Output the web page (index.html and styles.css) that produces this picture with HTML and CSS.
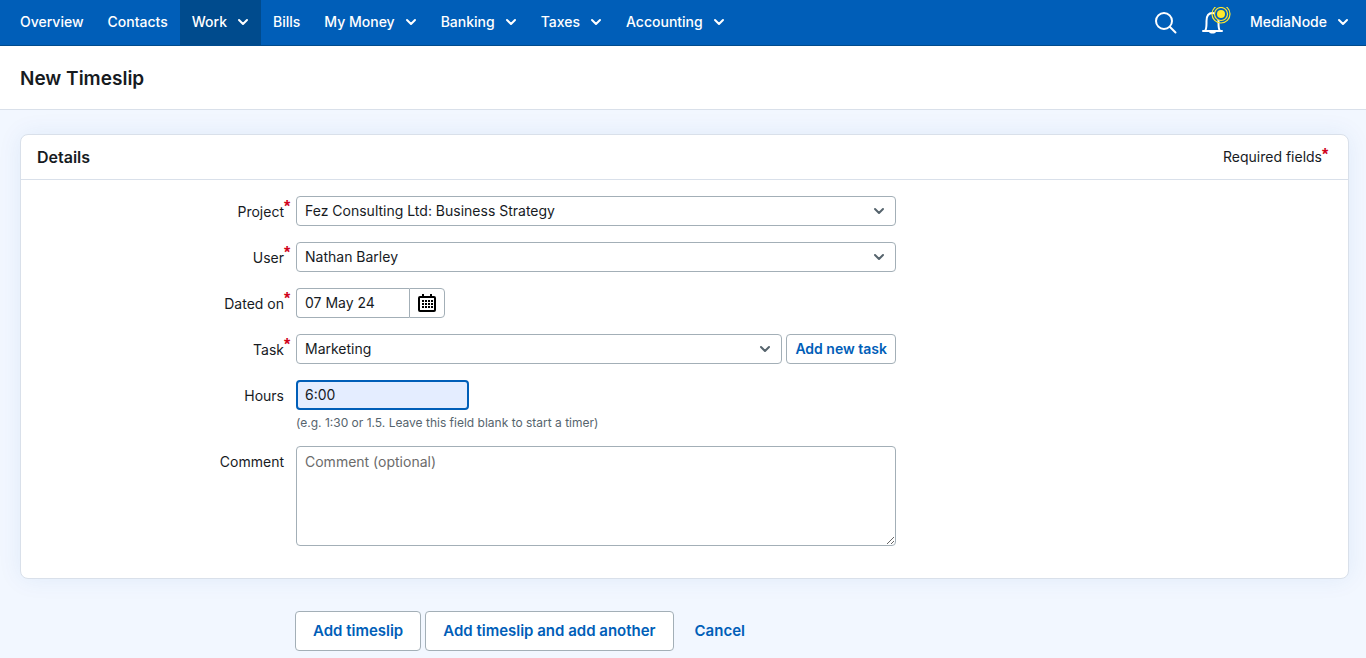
FILE: index.html
```html
<!DOCTYPE html>
<html lang="en">
<head>
    <meta charset="UTF-8">
    <meta name="viewport" content="width=device-width, initial-scale=1.0">
    <title>New Timeslip</title>
    <link rel="stylesheet" href="styles.css">
</head>
<body>
    <!-- Chevron shared by the menus and the drop-downs -->
    <svg class="sprite" width="0" height="0" aria-hidden="true">
        <symbol id="chevron" viewBox="0 0 12 8">
            <path d="M2 2l4 4 4-4" fill="none" stroke="currentColor" stroke-width="2" stroke-linecap="round" stroke-linejoin="round"/>
        </symbol>
    </svg>

    <header class="navbar">
        <nav class="nav-main">
            <a href="#">Overview</a>
            <a href="#">Contacts</a>
            <a href="#" class="active">Work <svg class="chevron"><use href="#chevron"/></svg></a>
            <a href="#">Bills</a>
            <a href="#">My Money <svg class="chevron"><use href="#chevron"/></svg></a>
            <a href="#">Banking <svg class="chevron"><use href="#chevron"/></svg></a>
            <a href="#">Taxes <svg class="chevron"><use href="#chevron"/></svg></a>
            <a href="#">Accounting <svg class="chevron"><use href="#chevron"/></svg></a>
        </nav>
        <div class="nav-tools">
            <button type="button" class="icon-button" aria-label="Search">
                <svg width="24" height="24" viewBox="0 0 24 24" fill="none" stroke="#fff" stroke-width="2">
                    <circle cx="10" cy="10" r="8"/>
                    <path d="M16 16l5.500 5.500" stroke-linecap="round"/>
                </svg>
            </button>
            <button type="button" class="icon-button" aria-label="Notifications">
                <svg width="32" height="32" viewBox="0 0 32 32" fill="none">
                    <path d="M3 24h19M5 24c1.500-2 1.500-4 1.500-8v-2c0-5 2-8 6-8s6 3 6 8v2c0 4 0 6 1.500 8" stroke="#fff" stroke-width="2" stroke-linecap="round" stroke-linejoin="round"/>
                    <path d="M9 25h7c-1 2-6 2-7 0z" fill="#fff"/>
                    <circle cx="21" cy="7" r="9" stroke="#ffe92e" stroke-width="1.200"/>
                    <circle cx="21" cy="7" r="6.500" fill="#005eb8" stroke="#ffe92e" stroke-width="1.200"/>
                    <circle cx="21" cy="7" r="4" fill="#ffe92e"/>
                </svg>
            </button>
            <a href="#">MediaNode <svg class="chevron"><use href="#chevron"/></svg></a>
        </div>
    </header>

    <div class="page-title">
        <h1>New Timeslip</h1>
    </div>

    <main>
        <form>
            <section class="card">
                <div class="card-header">
                    <h2>Details</h2>
                    <span class="required">Required fields</span>
                </div>
                <div class="card-body">
                    <div class="row">
                        <label for="project" class="required">Project</label>
                        <div class="select-wrap">
                            <select id="project">
                                <option>Fez Consulting Ltd: Business Strategy</option>
                            </select>
                            <svg class="chevron"><use href="#chevron"/></svg>
                        </div>
                    </div>
                    <div class="row">
                        <label for="user" class="required">User</label>
                        <div class="select-wrap">
                            <select id="user">
                                <option>Nathan Barley</option>
                            </select>
                            <svg class="chevron"><use href="#chevron"/></svg>
                        </div>
                    </div>
                    <div class="row">
                        <label for="dated-on" class="required">Dated on</label>
                        <div class="date-group">
                            <input type="text" id="dated-on" value="07 May 24">
                            <button type="button" aria-label="Choose date">
                                <svg width="20" height="20" viewBox="0 0 20 20" fill="none" stroke="#000" stroke-width="2">
                                    <rect x="2" y="4" width="16" height="14" rx="1"/>
                                    <path d="M6 1v4M14 1v4"/>
                                    <path d="M5 8h11M5 11h11M5 14h11" stroke-dasharray="2 1"/>
                                    <path d="M4 9.500h12M4 12.500h12" stroke="#fff" stroke-width="1"/>
                                </svg>
                            </button>
                        </div>
                    </div>
                    <div class="row">
                        <label for="task" class="required">Task</label>
                        <div class="task-group">
                            <div class="select-wrap">
                                <select id="task">
                                    <option>Marketing</option>
                                </select>
                                <svg class="chevron"><use href="#chevron"/></svg>
                            </div>
                            <button type="button" class="button button-small">Add new task</button>
                        </div>
                    </div>
                    <div class="row">
                        <label for="hours">Hours</label>
                        <div class="hours-group">
                            <input type="text" id="hours" value="6:00" aria-describedby="hours-hint">
                            <p id="hours-hint" class="hint">(e.g. 1:30 or 1.5. Leave this field blank to start a timer)</p>
                        </div>
                    </div>
                    <div class="row">
                        <label for="comment">Comment</label>
                        <textarea id="comment" placeholder="Comment (optional)"></textarea>
                    </div>
                </div>
            </section>
            <div class="actions">
                <button type="submit" class="button">Add timeslip</button>
                <button type="submit" class="button">Add timeslip and add another</button>
                <a href="#">Cancel</a>
            </div>
        </form>
    </main>
</body>
</html>
```

FILE: styles.css
```css
* {
    box-sizing: border-box;
}
body {
    margin: 0;
    font-family: Inter, "Liberation Sans", sans-serif;
    font-size: 14px;
    line-height: 20px;
    color: #171b1f;
    background-color: #f2f7ff;
}
h1, h2, p {
    margin: 0;
}
a {
    text-decoration: none;
}
button, input, select, textarea {
    font: inherit;
    color: inherit;
}
button {
    cursor: pointer;
}
.sprite {
    position: absolute;
}
.chevron {
    width: 12px;
    height: 8px;
    flex: none;
}

/* Navigation */
.navbar {
    display: flex;
    justify-content: space-between;
    height: 46px;
    padding: 0 8px;
    background-color: #005eb8;
    border-bottom: 1px solid #004b8d;
}
.nav-main, .nav-tools {
    display: flex;
    align-items: stretch;
}
.navbar a {
    display: flex;
    align-items: center;
    gap: 10px;
    padding: 0 12px 2px;
    font-weight: 500;
    color: #fff;
}
.navbar .active {
    background-color: #004b8d;
}
.nav-tools {
    gap: 10px;
}
.nav-tools a {
    padding: 0 9px 2px 8px;
}
.icon-button {
    display: flex;
    align-items: center;
    padding: 0 12px 0 7px;
    background: none;
    border: none;
}
.icon-button + .icon-button {
    padding: 0;
}

/* Page title */
.page-title {
    padding: 21px 20px 19px;
    background-color: #fff;
    border-bottom: 1px solid #d9e0ea;
}
h1 {
    font-size: 19px;
    line-height: 23px;
    font-weight: 600;
}

/* Details card */
main {
    padding: 24px 17px 7px 20px;
}
.card {
    background-color: #fff;
    border: 1px solid #d9e0ea;
    border-radius: 8px;
    box-shadow: 0 0 24px rgba(0, 94, 184, 0.08);
}
.card-header {
    display: flex;
    justify-content: space-between;
    align-items: center;
    height: 45px;
    padding: 0 20px 0 16px;
    border-bottom: 1px solid #d9e0ea;
}
h2 {
    font-size: 16px;
    font-weight: 600;
}
.required::after {
    content: "*";
    display: inline-block;
    width: 6px;
    height: 20px;
    font-family: "Liberation Sans", sans-serif;
    font-size: 16px;
    font-weight: 700;
    line-height: 16px;
    vertical-align: top;
    color: #d0021b;
}
.card-body {
    display: flex;
    flex-direction: column;
    gap: 16px;
    padding: 16px 0 32px;
}
.row {
    display: grid;
    grid-template-columns: 263px minmax(0, 600px);
    gap: 12px;
    align-items: start;
}
.row label {
    padding-top: 6px;
    text-align: right;
}
.row .required {
    margin-right: -6px;
}
.row .required::after {
    line-height: 10px;
}
input, select, textarea {
    display: block;
    width: 100%;
    height: 30px;
    padding: 0 8px;
    background-color: #fff;
    border: 1px solid #a3afb7;
    border-radius: 4px;
}
input {
    padding-bottom: 2px;
}
.select-wrap {
    display: grid;
    align-items: center;
    flex: 1;
}
.select-wrap > * {
    grid-area: 1 / 1;
}
.select-wrap select {
    appearance: none;
}
.select-wrap .chevron {
    justify-self: end;
    margin-right: 11px;
    color: #56646d;
    pointer-events: none;
}
.date-group {
    display: flex;
    width: 149px;
}
.date-group input {
    flex: 1;
    min-width: 0;
    border-right: none;
    border-radius: 4px 0 0 4px;
}
.date-group button {
    display: flex;
    align-items: center;
    justify-content: center;
    width: 36px;
    padding: 0;
    background-color: #fff;
    border: 1px solid #a3afb7;
    border-radius: 0 4px 4px 0;
}
.task-group {
    display: flex;
    gap: 4px;
}
#hours {
    width: 173px;
    padding: 0 7px 2px;
    background-color: #e4edff;
    border: 2px solid #005eb8;
    outline: none;
}
.hint {
    padding-top: 5px;
    font-size: 12px;
    line-height: 15px;
    color: #56646d;
}
.row textarea {
    height: 100px;
    padding: 5px 8px;
    resize: vertical;
}
::placeholder {
    color: #6b6b6b;
}

/* Buttons */
.button {
    height: 40px;
    padding: 0 17px;
    font-size: 15px;
    font-weight: 600;
    color: #005eb8;
    background-color: #fff;
    border: 1px solid #a3afb7;
    border-radius: 4px;
}
.button-small {
    height: 30px;
    padding: 0 8px;
    font-size: 14px;
}
.actions {
    display: flex;
    align-items: center;
    gap: 4px;
    padding: 32px 0 0 275px;
}
.actions a {
    padding: 0 17px;
    font-size: 15px;
    font-weight: 600;
    color: #005eb8;
}
```
